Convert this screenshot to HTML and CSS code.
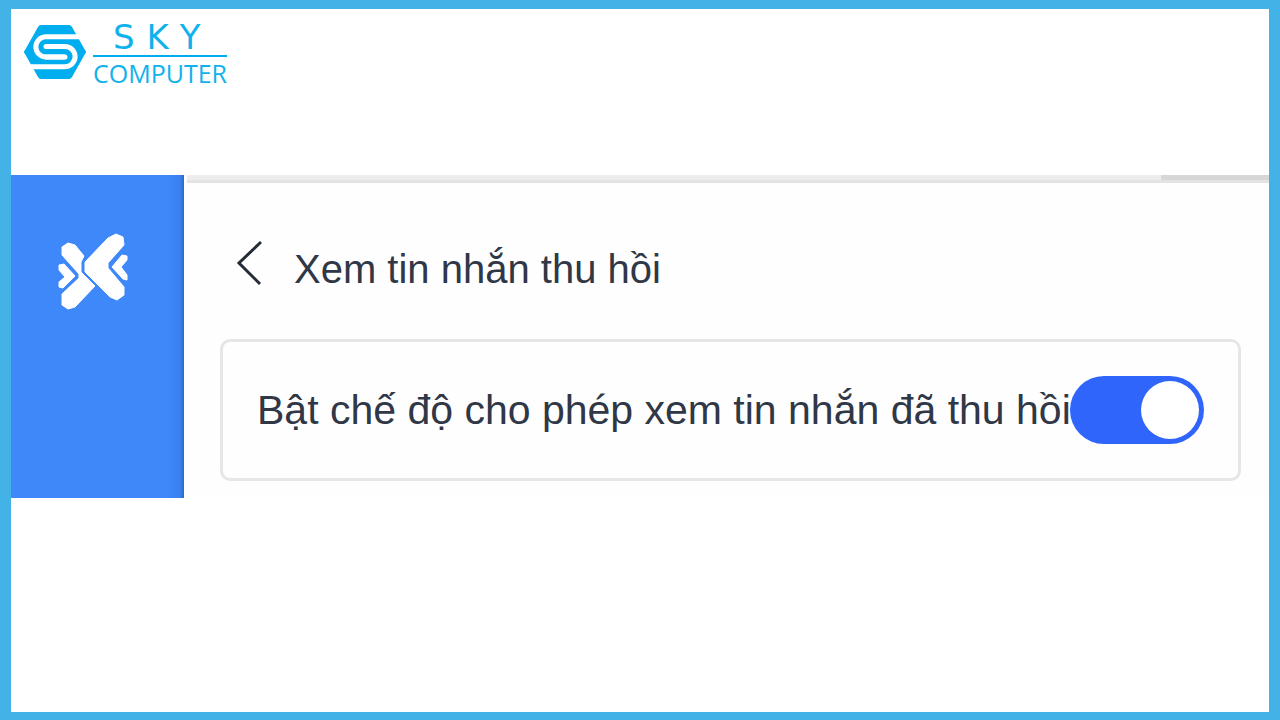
FILE: index.html
```html
<!DOCTYPE html>
<html lang="vi">
<head>
<meta charset="utf-8">
<meta name="viewport" content="width=device-width, initial-scale=1">
<title>Xem tin nhắn thu hồi</title>
<link rel="stylesheet" href="styles.css">
</head>
<body>
<div class="page">
  <header class="brand">
    <svg class="brand-mark" viewBox="0 0 64 56" aria-hidden="true">
      <path d="M18 1H46Q48 1 49 3L62 26Q64 28 62 30L49 53Q48 55 46 55H18Q16 55 15 53L2 30Q0 28 2 26L15 3Q16 1 18 1Z" fill="#00aeef"/>
      <g fill="none" stroke="#fff" stroke-width="5">
        <path d="M64 12.700H23A10.150 10.150 0 0 0 23 33H42"/>
        <path d="M0 42.700H42A10.100 10.100 0 0 0 42 22.500H23"/>
        <path d="M23 33H42M42 22.500H23" stroke-linecap="round"/>
      </g>
    </svg>
    <div class="brand-name">
      <span class="brand-top">SKY</span>
      <span class="brand-bottom">COMPUTER</span>
    </div>
  </header>
  <main class="app">
    <aside class="sidebar">
      <svg class="app-mark" viewBox="0 0 72 78" aria-label="Logo" role="img">
        <g fill="#fff" stroke="#fff" stroke-linejoin="round">
          <path d="M5 14 11 10 18 12 27 23 24 29V39L38 53 18 74 11 76 5 72V61L22 45V41L5 22Z"/>
          <path d="M51 5 59 1 66 4 67 12 51 30V35L67 54V62L60 67 53 64 28 39V29Z"/>
          <path d="M2 32 7 31 18 43 6 55 2 54V49L8 44 2 37Z"/>
          <path d="M65 22 70 23V27L64 34 70 42V47L66 46 55 34Z"/>
        </g>
      </svg>
    </aside>
    <section class="content">
      <div class="top-strip"></div>
      <div class="title-row">
        <button class="back" type="button" aria-label="Quay lại">
          <svg viewBox="0 0 26 46" aria-hidden="true"><path d="M25 2 3 23 24 44" fill="none" stroke="#252c38" stroke-width="3"/></svg>
        </button>
        <h1 class="title">Xem tin nhắn thu hồi</h1>
      </div>
      <div class="setting">
        <label class="setting-label" for="show-recalled">Bật chế độ cho phép xem tin nhắn đã thu hồi</label>
        <input class="switch" id="show-recalled" type="checkbox" role="switch" checked>
      </div>
    </section>
  </main>
</div>
</body>
</html>
```
FILE: styles.css
```css
* { box-sizing: border-box; }
body { margin: 0; }
.page {
  min-height: 100vh;
  border: solid #43b3e7;
  border-width: 9px 11px 8px;
  background: #fff;
  font-family: "Liberation Sans", Arial, sans-serif;
}
.brand {
  display: flex;
  gap: 6px;
  padding: 15px 12px 0;
  height: 166px;
}
.brand-mark { width: 64px; height: 56px; }
.brand-name {
  display: flex;
  flex-direction: column;
  align-self: flex-start;
  color: #10b2ec;
  font-family: "Open Sans", "Noto Sans", sans-serif;
}
.brand-top {
  padding: 0 0 5px 20px;
  border-bottom: 2px solid #00aeef;
  font-family: "DejaVu Sans", sans-serif;
  font-size: 34px;
  line-height: 26px;
  letter-spacing: 12px;
}
.brand-bottom { font-size: 25px; line-height: 32px; }
.app { display: flex; min-height: 323px; }
.sidebar {
  flex: 0 0 173px;
  padding: 58px 46px;
  background: linear-gradient(to right, #3f88f9 90%, #3980ed 98%, #2869ca);
}
.app-mark { display: block; width: 72px; height: 78px; }
.content {
  flex: 1;
  min-width: 0;
  background: #fefefe;
}
.top-strip {
  height: 8px;
  margin-left: 3px;
  background: linear-gradient(to right, #ededed 90%, #d7d7d7 90%);
  border-bottom: 3px solid #e3e3e3;
  border-top-left-radius: 3px;
}
.title-row {
  display: flex;
  align-items: center;
  gap: 32px;
  padding: 51px 52px 0;
}
.back {
  width: 26px;
  height: 46px;
  padding: 0;
  border: 0;
  background: none;
}
.back svg { display: block; width: 26px; height: 46px; }
.title {
  margin: 12px 0 0;
  color: #303746;
  font-size: 40px;
  font-weight: 400;
  line-height: 46px;
}
.setting {
  display: flex;
  align-items: center;
  justify-content: space-between;
  height: 142px;
  margin: 47px 28px 0 36px;
  padding: 0 34px;
  border: 3px solid #e6e6e7;
  border-radius: 10px;
}
.setting-label {
  flex: 1;
  min-width: 0;
  color: #303746;
  font-size: 41px;
  line-height: 46px;
  white-space: nowrap;
}
.switch {
  appearance: none;
  display: flex;
  justify-content: flex-end;
  flex: 0 0 134px;
  height: 68px;
  margin: 0;
  padding: 5px;
  border-radius: 34px;
  background: #3065fc;
}
.switch::before {
  content: "";
  width: 58px;
  height: 58px;
  border-radius: 50%;
  background: #fff;
}
```
